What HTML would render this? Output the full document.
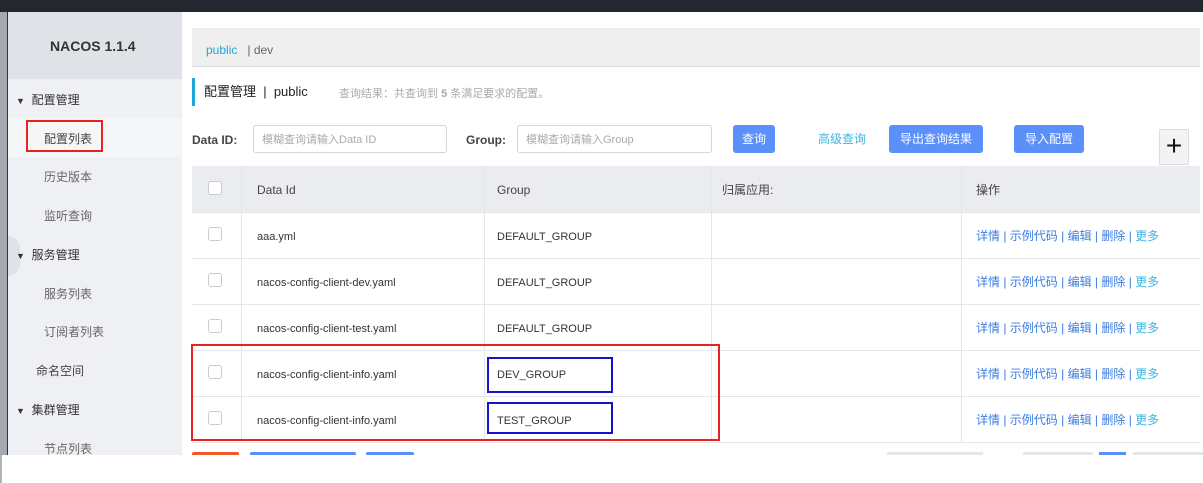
<!DOCTYPE html>
<html><head><meta charset="utf-8"><style>
*{margin:0;padding:0;box-sizing:border-box}
body{width:1203px;height:483px;background:#fff;position:relative;overflow:hidden;font-family:"Liberation Sans","Noto Sans CJK SC",sans-serif;color:#333}
.a{position:absolute}
.t{font-size:12px;white-space:nowrap;line-height:14px}
.lnk{color:#3a7de0}
.btn{position:absolute;background:#5b8ff9;color:#fff;font-size:12px;border-radius:3px;text-align:center;line-height:28px;top:125px;height:28px;white-space:nowrap}
.hl{position:absolute;left:192px;width:1008px;height:1px;background:#e4e6ea}
.vl{position:absolute;width:1px;background:#e4e6ea;top:166px;height:276px}
.cb{position:absolute;left:208px;width:14px;height:14px;border:1px solid #c9ccd1;border-radius:3px;background:#fff}
</style></head><body>
<div class="a" style="left:0;top:0;width:1203px;height:12px;background:#23272e"></div>
<div class="a" style="left:0;top:12px;width:7px;height:443px;background:#a5a9b0"></div>
<div class="a" style="left:0;top:455px;width:2px;height:28px;background:#b0b4ba"></div>
<div class="a" style="left:7px;top:12px;width:1px;height:443px;background:#333"></div>
<div class="a" style="left:8px;top:12px;width:174px;height:443px;background:#eef0f3"></div>
<div class="a" style="left:8px;top:12px;width:174px;height:67px;background:#dfe2e7"></div>
<div class="a t" style="left:50px;top:39px;font-size:14px;font-weight:bold;color:#333">NACOS 1.1.4</div>
<div class="a" style="left:8px;top:118px;width:174px;height:39px;background:#f5f6f8"></div>
<div class="a t" style="left:16px;top:93px;color:#333"><span style="font-size:9px">▼</span>&nbsp;&nbsp;配置管理</div>
<div class="a t" style="left:44px;top:132px;color:#444">配置列表</div>
<div class="a" style="left:26px;top:120px;width:77px;height:32px;border:2px solid #e8231f"></div>
<div class="a t" style="left:44px;top:170px;color:#666">历史版本</div>
<div class="a t" style="left:44px;top:209px;color:#666">监听查询</div>
<div class="a" style="left:8px;top:236px;width:12px;height:40px;border-radius:0 20px 20px 0;background:#dfe2e6"></div>
<div class="a t" style="left:16px;top:248px;color:#333"><span style="font-size:9px">▼</span>&nbsp;&nbsp;服务管理</div>
<div class="a t" style="left:44px;top:287px;color:#666">服务列表</div>
<div class="a t" style="left:44px;top:325px;color:#666">订阅者列表</div>
<div class="a t" style="left:36px;top:364px;color:#444">命名空间</div>
<div class="a t" style="left:16px;top:403px;color:#333"><span style="font-size:9px">▼</span>&nbsp;&nbsp;集群管理</div>
<div class="a t" style="left:44px;top:442px;color:#666">节点列表</div>

<div class="a" style="left:192px;top:28px;width:1008px;height:39px;background:#efeff0;border-bottom:1px solid #ddd"></div>
<div class="a t" style="left:206px;top:43px"><span style="color:#1ea5d9">public</span>&nbsp;&nbsp;&nbsp;<span style="color:#666">| dev</span></div>
<div class="a" style="left:192px;top:78px;width:3px;height:28px;background:#1ea5d9"></div>
<div class="a t" style="left:204px;top:85px;font-size:13px;color:#222">配置管理 &nbsp;|&nbsp; public</div>
<div class="a t" style="left:339px;top:87px;font-size:11px;color:#aaa">查询结果：共查询到 <b>5</b> 条满足要求的配置。</div>

<div class="a t" style="left:192px;top:133px;font-weight:bold;color:#444">Data ID:</div>
<div class="a" style="left:253px;top:125px;width:194px;height:28px;border:1px solid #d4d6d9;border-radius:3px"></div>
<div class="a t" style="left:262px;top:133px;color:#aaa;font-size:11px">模糊查询请输入Data ID</div>
<div class="a t" style="left:466px;top:133px;font-weight:bold;color:#444">Group:</div>
<div class="a" style="left:517px;top:125px;width:195px;height:28px;border:1px solid #d4d6d9;border-radius:3px"></div>
<div class="a t" style="left:526px;top:133px;color:#aaa;font-size:11px">模糊查询请输入Group</div>
<div class="btn" style="left:733px;width:42px">查询</div>
<div class="a t" style="left:818px;top:132px;color:#3fb5e0">高级查询</div>
<div class="btn" style="left:889px;width:94px">导出查询结果</div>
<div class="btn" style="left:1014px;width:70px">导入配置</div>
<div class="a" style="left:1159px;top:129px;width:30px;height:36px;background:#f3f3f3;border:1px solid #ddd;font-size:28px;line-height:32px;text-align:center;color:#111">+</div>

<div class="a" style="left:192px;top:166px;width:1008px;height:46px;background:#ebecf0"></div>
<div class="hl" style="top:212px"></div><div class="hl" style="top:258px"></div><div class="hl" style="top:304px"></div><div class="hl" style="top:350px"></div><div class="hl" style="top:396px"></div><div class="hl" style="top:442px"></div>
<div class="vl" style="left:241px"></div><div class="vl" style="left:484px"></div><div class="vl" style="left:711px"></div><div class="vl" style="left:961px"></div>
<div class="cb" style="top:181px"></div><div class="cb" style="top:227px"></div><div class="cb" style="top:273px"></div><div class="cb" style="top:319px"></div><div class="cb" style="top:365px"></div><div class="cb" style="top:411px"></div>
<div class="a t" style="left:257px;top:183px;color:#444">Data Id</div>
<div class="a t" style="left:497px;top:183px;color:#444">Group</div>
<div class="a t" style="left:722px;top:183px;color:#444">归属应用:</div>
<div class="a t" style="left:976px;top:183px;color:#444">操作</div>

<div class="a t" style="left:257px;top:230px;font-size:11px">aaa.yml</div>
<div class="a t" style="left:497px;top:230px;font-size:11px">DEFAULT_GROUP</div>
<div class="a t" style="left:257px;top:276px;font-size:11px">nacos-config-client-dev.yaml</div>
<div class="a t" style="left:497px;top:276px;font-size:11px">DEFAULT_GROUP</div>
<div class="a t" style="left:257px;top:322px;font-size:11px">nacos-config-client-test.yaml</div>
<div class="a t" style="left:497px;top:322px;font-size:11px">DEFAULT_GROUP</div>
<div class="a t" style="left:257px;top:368px;font-size:11px">nacos-config-client-info.yaml</div>
<div class="a t" style="left:497px;top:368px;font-size:11px">DEV_GROUP</div>
<div class="a t" style="left:257px;top:414px;font-size:11px">nacos-config-client-info.yaml</div>
<div class="a t" style="left:497px;top:414px;font-size:11px">TEST_GROUP</div>

<div class="a t lnk" style="left:976px;top:229px">详情 | 示例代码 | 编辑 | 删除 | <span style="color:#3fb5e0">更多</span></div>
<div class="a t lnk" style="left:976px;top:275px">详情 | 示例代码 | 编辑 | 删除 | <span style="color:#3fb5e0">更多</span></div>
<div class="a t lnk" style="left:976px;top:321px">详情 | 示例代码 | 编辑 | 删除 | <span style="color:#3fb5e0">更多</span></div>
<div class="a t lnk" style="left:976px;top:367px">详情 | 示例代码 | 编辑 | 删除 | <span style="color:#3fb5e0">更多</span></div>
<div class="a t lnk" style="left:976px;top:413px">详情 | 示例代码 | 编辑 | 删除 | <span style="color:#3fb5e0">更多</span></div>

<div class="a" style="left:191px;top:344px;width:529px;height:97px;border:2px solid #e8231f"></div>
<div class="a" style="left:487px;top:357px;width:126px;height:36px;border:2px solid #1414cc"></div>
<div class="a" style="left:487px;top:402px;width:126px;height:32px;border:2px solid #1414cc"></div>

<div class="a" style="left:192px;top:452px;width:47px;height:3px;background:#f05a24;border-radius:2px 2px 0 0"></div>
<div class="a" style="left:250px;top:452px;width:106px;height:3px;background:#5b8ff9;border-radius:2px 2px 0 0"></div>
<div class="a" style="left:366px;top:452px;width:48px;height:3px;background:#5b8ff9;border-radius:2px 2px 0 0"></div>
<div class="a" style="left:887px;top:452px;width:96px;height:3px;background:#e4e6ea"></div>
<div class="a" style="left:1023px;top:452px;width:70px;height:3px;background:#e4e6ea"></div>
<div class="a" style="left:1099px;top:452px;width:27px;height:3px;background:#5b8ff9"></div>
<div class="a" style="left:1133px;top:452px;width:70px;height:3px;background:#e4e6ea"></div>
</body></html>
